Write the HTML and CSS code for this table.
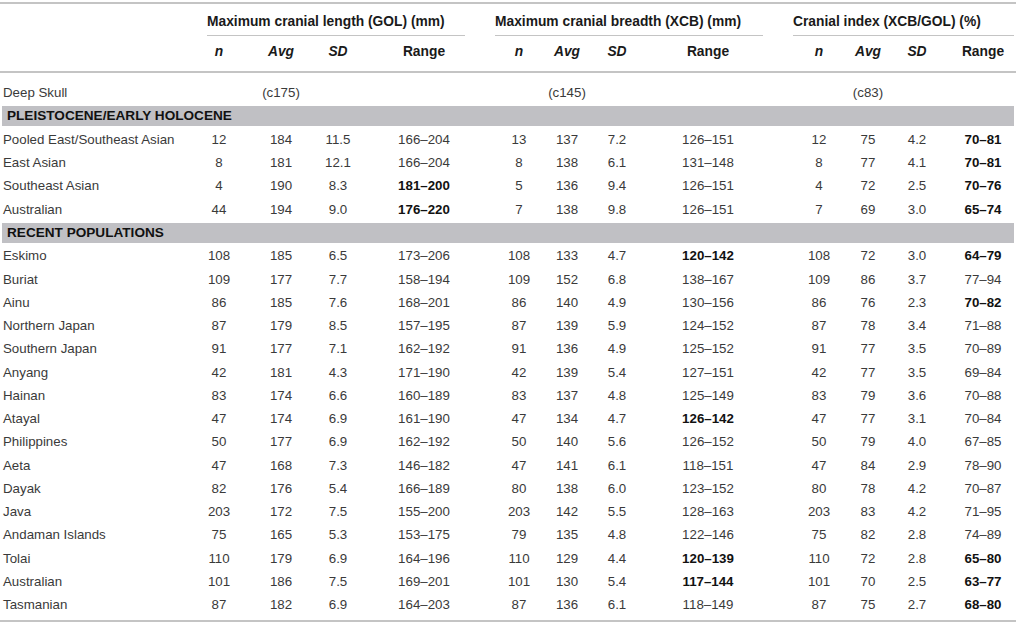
FILE: index.html
```html
<!DOCTYPE html>
<html>
<head>
<meta charset="utf-8">
<link rel="stylesheet" href="styles.css">
</head>
<body>
<div class="tbl">
  <div class="row head1">
    <div></div>
    <div class="grp g1"><span>Maximum cranial length (GOL) (mm)</span></div>
    <div class="grp g2"><span>Maximum cranial breadth (XCB) (mm)</span></div>
    <div class="grp g3"><span>Cranial index (XCB/GOL) (%)</span></div>
  </div>
  <div class="row head2">
    <div></div>
    <div><i>n</i></div><div><i>Avg</i></div><div><i>SD</i></div><div>Range</div>
    <div><i>n</i></div><div><i>Avg</i></div><div><i>SD</i></div><div>Range</div>
    <div><i>n</i></div><div><i>Avg</i></div><div><i>SD</i></div><div>Range</div>
  </div>
  <div class="body">
    <div class="row data"><div>Deep Skull</div><div></div><div>(c175)</div><div></div><div></div><div></div><div>(c145)</div><div></div><div></div><div></div><div>(c83)</div><div></div><div></div></div>
    <div class="row band"><div class="bandin">PLEISTOCENE/EARLY HOLOCENE</div></div>
    <div class="row data"><div>Pooled East/Southeast Asian</div><div>12</div><div>184</div><div>11.5</div><div>166–204</div><div>13</div><div>137</div><div>7.2</div><div>126–151</div><div>12</div><div>75</div><div>4.2</div><div><b>70–81</b></div></div>
    <div class="row data"><div>East Asian</div><div>8</div><div>181</div><div>12.1</div><div>166–204</div><div>8</div><div>138</div><div>6.1</div><div>131–148</div><div>8</div><div>77</div><div>4.1</div><div><b>70–81</b></div></div>
    <div class="row data"><div>Southeast Asian</div><div>4</div><div>190</div><div>8.3</div><div><b>181–200</b></div><div>5</div><div>136</div><div>9.4</div><div>126–151</div><div>4</div><div>72</div><div>2.5</div><div><b>70–76</b></div></div>
    <div class="row data"><div>Australian</div><div>44</div><div>194</div><div>9.0</div><div><b>176–220</b></div><div>7</div><div>138</div><div>9.8</div><div>126–151</div><div>7</div><div>69</div><div>3.0</div><div><b>65–74</b></div></div>
    <div class="row band"><div class="bandin">RECENT POPULATIONS</div></div>
    <div class="row data"><div>Eskimo</div><div>108</div><div>185</div><div>6.5</div><div>173–206</div><div>108</div><div>133</div><div>4.7</div><div><b>120–142</b></div><div>108</div><div>72</div><div>3.0</div><div><b>64–79</b></div></div>
    <div class="row data"><div>Buriat</div><div>109</div><div>177</div><div>7.7</div><div>158–194</div><div>109</div><div>152</div><div>6.8</div><div>138–167</div><div>109</div><div>86</div><div>3.7</div><div>77–94</div></div>
    <div class="row data"><div>Ainu</div><div>86</div><div>185</div><div>7.6</div><div>168–201</div><div>86</div><div>140</div><div>4.9</div><div>130–156</div><div>86</div><div>76</div><div>2.3</div><div><b>70–82</b></div></div>
    <div class="row data"><div>Northern Japan</div><div>87</div><div>179</div><div>8.5</div><div>157–195</div><div>87</div><div>139</div><div>5.9</div><div>124–152</div><div>87</div><div>78</div><div>3.4</div><div>71–88</div></div>
    <div class="row data"><div>Southern Japan</div><div>91</div><div>177</div><div>7.1</div><div>162–192</div><div>91</div><div>136</div><div>4.9</div><div>125–152</div><div>91</div><div>77</div><div>3.5</div><div>70–89</div></div>
    <div class="row data"><div>Anyang</div><div>42</div><div>181</div><div>4.3</div><div>171–190</div><div>42</div><div>139</div><div>5.4</div><div>127–151</div><div>42</div><div>77</div><div>3.5</div><div>69–84</div></div>
    <div class="row data"><div>Hainan</div><div>83</div><div>174</div><div>6.6</div><div>160–189</div><div>83</div><div>137</div><div>4.8</div><div>125–149</div><div>83</div><div>79</div><div>3.6</div><div>70–88</div></div>
    <div class="row data"><div>Atayal</div><div>47</div><div>174</div><div>6.9</div><div>161–190</div><div>47</div><div>134</div><div>4.7</div><div><b>126–142</b></div><div>47</div><div>77</div><div>3.1</div><div>70–84</div></div>
    <div class="row data"><div>Philippines</div><div>50</div><div>177</div><div>6.9</div><div>162–192</div><div>50</div><div>140</div><div>5.6</div><div>126–152</div><div>50</div><div>79</div><div>4.0</div><div>67–85</div></div>
    <div class="row data"><div>Aeta</div><div>47</div><div>168</div><div>7.3</div><div>146–182</div><div>47</div><div>141</div><div>6.1</div><div>118–151</div><div>47</div><div>84</div><div>2.9</div><div>78–90</div></div>
    <div class="row data"><div>Dayak</div><div>82</div><div>176</div><div>5.4</div><div>166–189</div><div>80</div><div>138</div><div>6.0</div><div>123–152</div><div>80</div><div>78</div><div>4.2</div><div>70–87</div></div>
    <div class="row data"><div>Java</div><div>203</div><div>172</div><div>7.5</div><div>155–200</div><div>203</div><div>142</div><div>5.5</div><div>128–163</div><div>203</div><div>83</div><div>4.2</div><div>71–95</div></div>
    <div class="row data"><div>Andaman Islands</div><div>75</div><div>165</div><div>5.3</div><div>153–175</div><div>79</div><div>135</div><div>4.8</div><div>122–146</div><div>75</div><div>82</div><div>2.8</div><div>74–89</div></div>
    <div class="row data"><div>Tolai</div><div>110</div><div>179</div><div>6.9</div><div>164–196</div><div>110</div><div>129</div><div>4.4</div><div><b>120–139</b></div><div>110</div><div>72</div><div>2.8</div><div><b>65–80</b></div></div>
    <div class="row data"><div>Australian</div><div>101</div><div>186</div><div>7.5</div><div>169–201</div><div>101</div><div>130</div><div>5.4</div><div><b>117–144</b></div><div>101</div><div>70</div><div>2.5</div><div><b>63–77</b></div></div>
    <div class="row data"><div>Tasmanian</div><div>87</div><div>182</div><div>6.9</div><div>164–203</div><div>87</div><div>136</div><div>6.1</div><div>118–149</div><div>87</div><div>75</div><div>2.7</div><div><b>68–80</b></div></div>
  </div>
</div>
</body>
</html>
```
FILE: styles.css
```css
html, body {
  margin: 0;
  padding: 0;
  background: #ffffff;
}
body {
  font-family: "Liberation Sans", Arial, Helvetica, sans-serif;
  font-size: 13.3px;
  color: #3a3a3a;
}
.tbl {
  width: 1016px;
  padding-top: 2px;
}
.row {
  display: grid;
  grid-template-columns: 192px 54px 70px 44px 120px 63px 48px 52px 135px 65px 50px 48px 75px;
}
.row > div {
  text-align: center;
  white-space: nowrap;
}
.head1 {
  border-top: 2px solid #c4c4c4;
  padding-top: 10px;
  font-weight: bold;
  font-size: 13.8px;
  color: #1a1a1a;
}
.head1 .grp {
  text-align: left;
  padding: 0 15px;
}
.head1 .grp span {
  display: block;
  line-height: 16px;
  padding-bottom: 5px;
  border-bottom: 1px solid #c4c4c4;
}
.g1 { grid-column: 2 / 6; }
.g2 { grid-column: 6 / 10; }
.head1 .g3 { grid-column: 10 / 14; padding-right: 2px; }
.head2 {
  padding-top: 8px;
  padding-bottom: 11px;
  line-height: 16px;
  font-weight: bold;
  font-size: 13.8px;
  color: #1a1a1a;
  border-bottom: 2px solid #c4c4c4;
}
.head2 i { font-style: italic; }
.data > div:nth-child(1) { text-align: left; padding-left: 3px; }
.data > div:nth-child(5), .head2 > div:nth-child(5) { padding-left: 8px; }
.data > div:nth-child(6), .head2 > div:nth-child(6) { padding-left: 15px; }
.data > div:nth-child(9), .head2 > div:nth-child(9) { padding-right: 5px; }
.data > div:nth-child(10), .head2 > div:nth-child(10) { padding-left: 17px; }
.data > div:nth-child(13), .head2 > div:nth-child(13) { padding-left: 9px; }
.body {
  padding-top: 8.4px;
  padding-bottom: 3px;
  border-bottom: 2px solid #c4c4c4;
}
.data {
  height: 23.27px;
  line-height: 23.27px;
}
.data b {
  color: #111111;
}
.band {
  display: block;
  height: 23.27px;
  padding: 1.6px 2px 0;
  box-sizing: border-box;
}
.row.band > .bandin {
  height: 20px;
  line-height: 20px;
  background: #c0c0c4;
  text-align: left;
  padding-left: 5px;
  font-weight: bold;
  font-size: 13.6px;
  color: #111111;
}
```
